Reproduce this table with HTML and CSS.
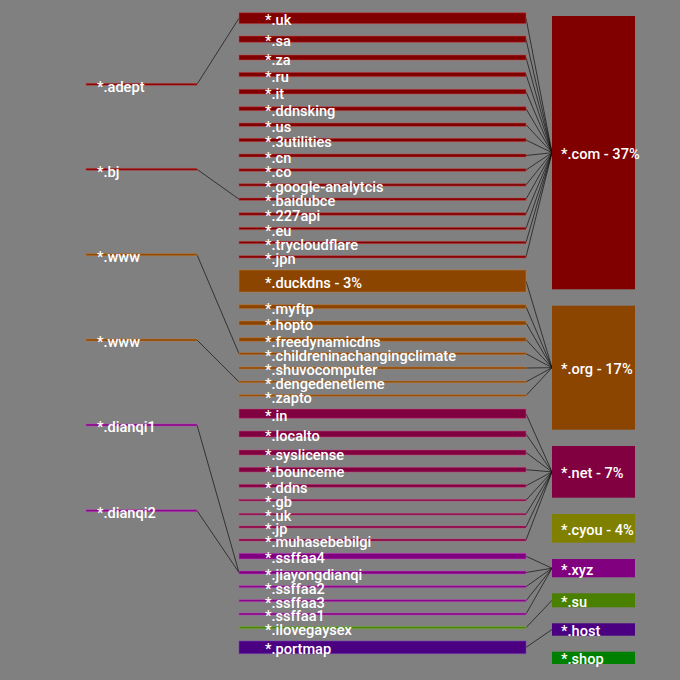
FILE: index.html
```html
<!DOCTYPE html>
<html>
<head>
<meta charset="utf-8">
<link rel="stylesheet" href="styles.css">
</head>
<body>
<svg class="chart" width="680" height="680" viewBox="0 0 680 680">
  <!-- left links -->
  <g class="links">
    <path d="M197,84.3 L239,18.2"/>
    <path d="M197,169.3 L239,199.2"/>
    <path d="M197,254.7 L239,353.7"/>
    <path d="M197,340 L239,381.9"/>
    <path d="M197,425 L239,572.5"/>
    <path d="M197,510.7 L239,572.5"/>
  </g>
  <!-- right links -->
  <g class="links">
    <path d="M526,18.2 L552,152.7"/>
    <path d="M526,39.2 L552,152.7"/>
    <path d="M526,57.5 L552,152.7"/>
    <path d="M526,74.5 L552,152.7"/>
    <path d="M526,91.7 L552,152.7"/>
    <path d="M526,108.7 L552,152.7"/>
    <path d="M526,124.7 L552,152.7"/>
    <path d="M526,140 L552,152.7"/>
    <path d="M526,155.5 L552,152.7"/>
    <path d="M526,170 L552,152.7"/>
    <path d="M526,184.9 L552,152.7"/>
    <path d="M526,199.2 L552,152.7"/>
    <path d="M526,214 L552,152.7"/>
    <path d="M526,228.5 L552,152.7"/>
    <path d="M526,242.5 L552,152.7"/>
    <path d="M526,256.9 L552,152.7"/>
    <path d="M526,281 L552,367.7"/>
    <path d="M526,306.7 L552,367.7"/>
    <path d="M526,323 L552,367.7"/>
    <path d="M526,339.5 L552,367.7"/>
    <path d="M526,353.7 L552,367.7"/>
    <path d="M526,368 L552,367.7"/>
    <path d="M526,381.9 L552,367.7"/>
    <path d="M526,395.5 L552,367.7"/>
    <path d="M526,413.7 L552,471.9"/>
    <path d="M526,434 L552,471.9"/>
    <path d="M526,452.5 L552,471.9"/>
    <path d="M526,469.7 L552,471.9"/>
    <path d="M526,485.8 L552,471.9"/>
    <path d="M526,500.2 L552,471.9"/>
    <path d="M526,514.2 L552,471.9"/>
    <path d="M526,527 L552,471.9"/>
    <path d="M526,540 L552,471.9"/>
    <path d="M526,556.2 L552,568.2"/>
    <path d="M526,572.5 L552,568.2"/>
    <path d="M526,586.7 L552,568.2"/>
    <path d="M526,600.7 L552,568.2"/>
    <path d="M526,614 L552,568.2"/>
    <path d="M526,627.7 L552,600.3"/>
    <path d="M526,647.4 L552,629.5"/>
  </g>

  <!-- left nodes -->
  <g class="lnodes">
    <rect class="n-com" x="86" y="83.3" width="111" height="2"/>
    <rect class="n-com" x="86" y="168.3" width="111" height="2"/>
    <rect class="n-org" x="86" y="253.7" width="111" height="2"/>
    <rect class="n-org" x="86" y="339" width="111" height="2"/>
    <rect class="n-xyz" x="86" y="424" width="111" height="2"/>
    <rect class="n-xyz" x="86" y="509.7" width="111" height="2"/>
  </g>

  <!-- middle nodes -->
  <g class="mnodes">
    <rect class="n-com" x="239" y="12.7" width="287" height="11"/>
    <rect class="n-com" x="239" y="36" width="287" height="6.3"/>
    <rect class="n-com" x="239" y="55" width="287" height="5"/>
    <rect class="n-com" x="239" y="72.3" width="287" height="4.4"/>
    <rect class="n-com" x="239" y="89.3" width="287" height="4.7"/>
    <rect class="n-com" x="239" y="106.7" width="287" height="4"/>
    <rect class="n-com" x="239" y="123" width="287" height="3.4"/>
    <rect class="n-com" x="239" y="138.3" width="287" height="3.4"/>
    <rect class="n-com" x="239" y="154" width="287" height="3"/>
    <rect class="n-com" x="239" y="168.7" width="287" height="2.6"/>
    <rect class="n-com" x="239" y="183.7" width="287" height="2.4"/>
    <rect class="n-com" x="239" y="198" width="287" height="2.4"/>
    <rect class="n-com" x="239" y="212.7" width="287" height="2.6"/>
    <rect class="n-com" x="239" y="227.3" width="287" height="2.4"/>
    <rect class="n-com" x="239" y="241.3" width="287" height="2.4"/>
    <rect class="n-com" x="239" y="255.7" width="287" height="2.3"/>
    <rect class="n-org" x="239" y="270" width="287" height="22"/>
    <rect class="n-org" x="239" y="304.7" width="287" height="4"/>
    <rect class="n-org" x="239" y="321" width="287" height="4"/>
    <rect class="n-org" x="239" y="337.7" width="287" height="3.6"/>
    <rect class="n-org" x="239" y="352.7" width="287" height="2"/>
    <rect class="n-org" x="239" y="367" width="287" height="2"/>
    <rect class="n-org" x="239" y="381" width="287" height="1.7"/>
    <rect class="n-org" x="239" y="394.7" width="287" height="1.6"/>
    <rect class="n-net" x="239" y="409" width="287" height="9.3"/>
    <rect class="n-net" x="239" y="431" width="287" height="6"/>
    <rect class="n-net" x="239" y="450" width="287" height="5"/>
    <rect class="n-net" x="239" y="467.3" width="287" height="4.7"/>
    <rect class="n-net" x="239" y="484.3" width="287" height="3"/>
    <rect class="n-net" x="239" y="499.3" width="287" height="1.7"/>
    <rect class="n-net" x="239" y="513.3" width="287" height="1.7"/>
    <rect class="n-net" x="239" y="526" width="287" height="2"/>
    <rect class="n-net" x="239" y="539" width="287" height="2"/>
    <rect class="n-xyz" x="239" y="553.3" width="287" height="5.7"/>
    <rect class="n-xyz" x="239" y="571" width="287" height="3"/>
    <rect class="n-xyz" x="239" y="585.7" width="287" height="2"/>
    <rect class="n-xyz" x="239" y="599.7" width="287" height="2"/>
    <rect class="n-xyz" x="239" y="613" width="287" height="2"/>
    <rect class="n-su" x="239" y="626.7" width="287" height="2"/>
    <rect class="n-host" x="239" y="641" width="287" height="12.7"/>
  </g>

  <!-- right nodes -->
  <g class="rnodes">
    <rect class="r-com" x="552" y="16" width="83" height="273.3"/>
    <rect class="r-org" x="552" y="305.7" width="83" height="124"/>
    <rect class="r-net" x="552" y="446" width="83" height="51.7"/>
    <rect class="r-cyou" x="552" y="514" width="83" height="28.7"/>
    <rect class="r-xyz" x="552" y="559" width="83" height="18.3"/>
    <rect class="r-su" x="552" y="593.3" width="83" height="14"/>
    <rect class="r-host" x="552" y="623.3" width="83" height="12.4"/>
    <rect class="r-shop" x="552" y="651.7" width="83" height="12.3"/>
  </g>

  <!-- labels -->
  <g class="lbl">
    <text x="97" y="91.5">*.adept</text>
    <text x="97" y="176.5">*.bj</text>
    <text x="97" y="261.9">*.www</text>
    <text x="97" y="347.2">*.www</text>
    <text x="97" y="432.2">*.dianqi1</text>
    <text x="97" y="517.9">*.dianqi2</text>

    <text x="265" y="25.2">*.uk</text>
    <text x="265" y="46.2">*.sa</text>
    <text x="265" y="64.5">*.za</text>
    <text x="265" y="81.5">*.ru</text>
    <text x="265" y="98.7">*.it</text>
    <text x="265" y="115.7">*.ddnsking</text>
    <text x="265" y="131.7">*.us</text>
    <text x="265" y="147">*.3utilities</text>
    <text x="265" y="162.5">*.cn</text>
    <text x="265" y="177">*.co</text>
    <text x="265" y="191.9">*.google-analytcis</text>
    <text x="265" y="206.2">*.baidubce</text>
    <text x="265" y="221">*.227api</text>
    <text x="265" y="235.5">*.eu</text>
    <text x="265" y="249.5">*.trycloudflare</text>
    <text x="265" y="263.9">*.jpn</text>
    <text x="265" y="288">*.duckdns - 3%</text>
    <text x="265" y="313.7">*.myftp</text>
    <text x="265" y="330">*.hopto</text>
    <text x="265" y="346.5">*.freedynamicdns</text>
    <text x="265" y="360.7">*.childreninachangingclimate</text>
    <text x="265" y="375">*.shuvocomputer</text>
    <text x="265" y="388.9">*.dengedenetleme</text>
    <text x="265" y="402.5">*.zapto</text>
    <text x="265" y="420.7">*.in</text>
    <text x="265" y="441">*.localto</text>
    <text x="265" y="459.5">*.syslicense</text>
    <text x="265" y="476.7">*.bounceme</text>
    <text x="265" y="492.8">*.ddns</text>
    <text x="265" y="507.2">*.gb</text>
    <text x="265" y="521.2">*.uk</text>
    <text x="265" y="534">*.jp</text>
    <text x="265" y="547">*.muhasebebilgi</text>
    <text x="265" y="563.2">*.ssffaa4</text>
    <text x="265" y="579.5">*.jiayongdianqi</text>
    <text x="265" y="593.7">*.ssffaa2</text>
    <text x="265" y="607.7">*.ssffaa3</text>
    <text x="265" y="621">*.ssffaa1</text>
    <text x="265" y="634.7">*.ilovegaysex</text>
    <text x="265" y="654.4">*.portmap</text>

    <text x="561" y="159.2">*.com - 37%</text>
    <text x="561" y="374.2">*.org - 17%</text>
    <text x="561" y="478.4">*.net - 7%</text>
    <text x="561" y="534.9">*.cyou - 4%</text>
    <text x="561" y="574.7">*.xyz</text>
    <text x="561" y="606.8">*.su</text>
    <text x="561" y="636">*.host</text>
    <text x="561" y="664.4">*.shop</text>
  </g>
</svg>
</body>
</html>
```

FILE: styles.css
```css
html, body {
  margin: 0;
  padding: 0;
  background: #808080;
}

.chart {
  display: block;
}

.links path {
  fill: none;
  stroke: #111;
  stroke-opacity: 0.7;
  stroke-width: 1;
}

.mnodes rect,
.lnodes rect {
  stroke-width: 1;
  stroke-opacity: 0.55;
}

.n-com { fill: #800000; stroke: #c04848; }
.n-org { fill: #8b4500; stroke: #c07a3a; }
.n-net { fill: #800040; stroke: #c04880; }
.n-xyz { fill: #800080; stroke: #c048c0; }
.n-su { fill: #4a8000; stroke: #7ab040; }
.n-host { fill: #4b0082; stroke: #7a40b8; }

.r-com { fill: #800000; }
.r-org { fill: #8b4500; }
.r-net { fill: #800040; }
.r-cyou { fill: #808000; }
.r-xyz { fill: #800080; }
.r-su { fill: #4a8000; }
.r-host { fill: #4b0082; }
.r-shop { fill: #008000; }

.lbl text {
  font-family: Roboto, "Liberation Sans", sans-serif;
  font-size: 14.6px;
  font-weight: 500;
  fill: #ffffff;
}
```
